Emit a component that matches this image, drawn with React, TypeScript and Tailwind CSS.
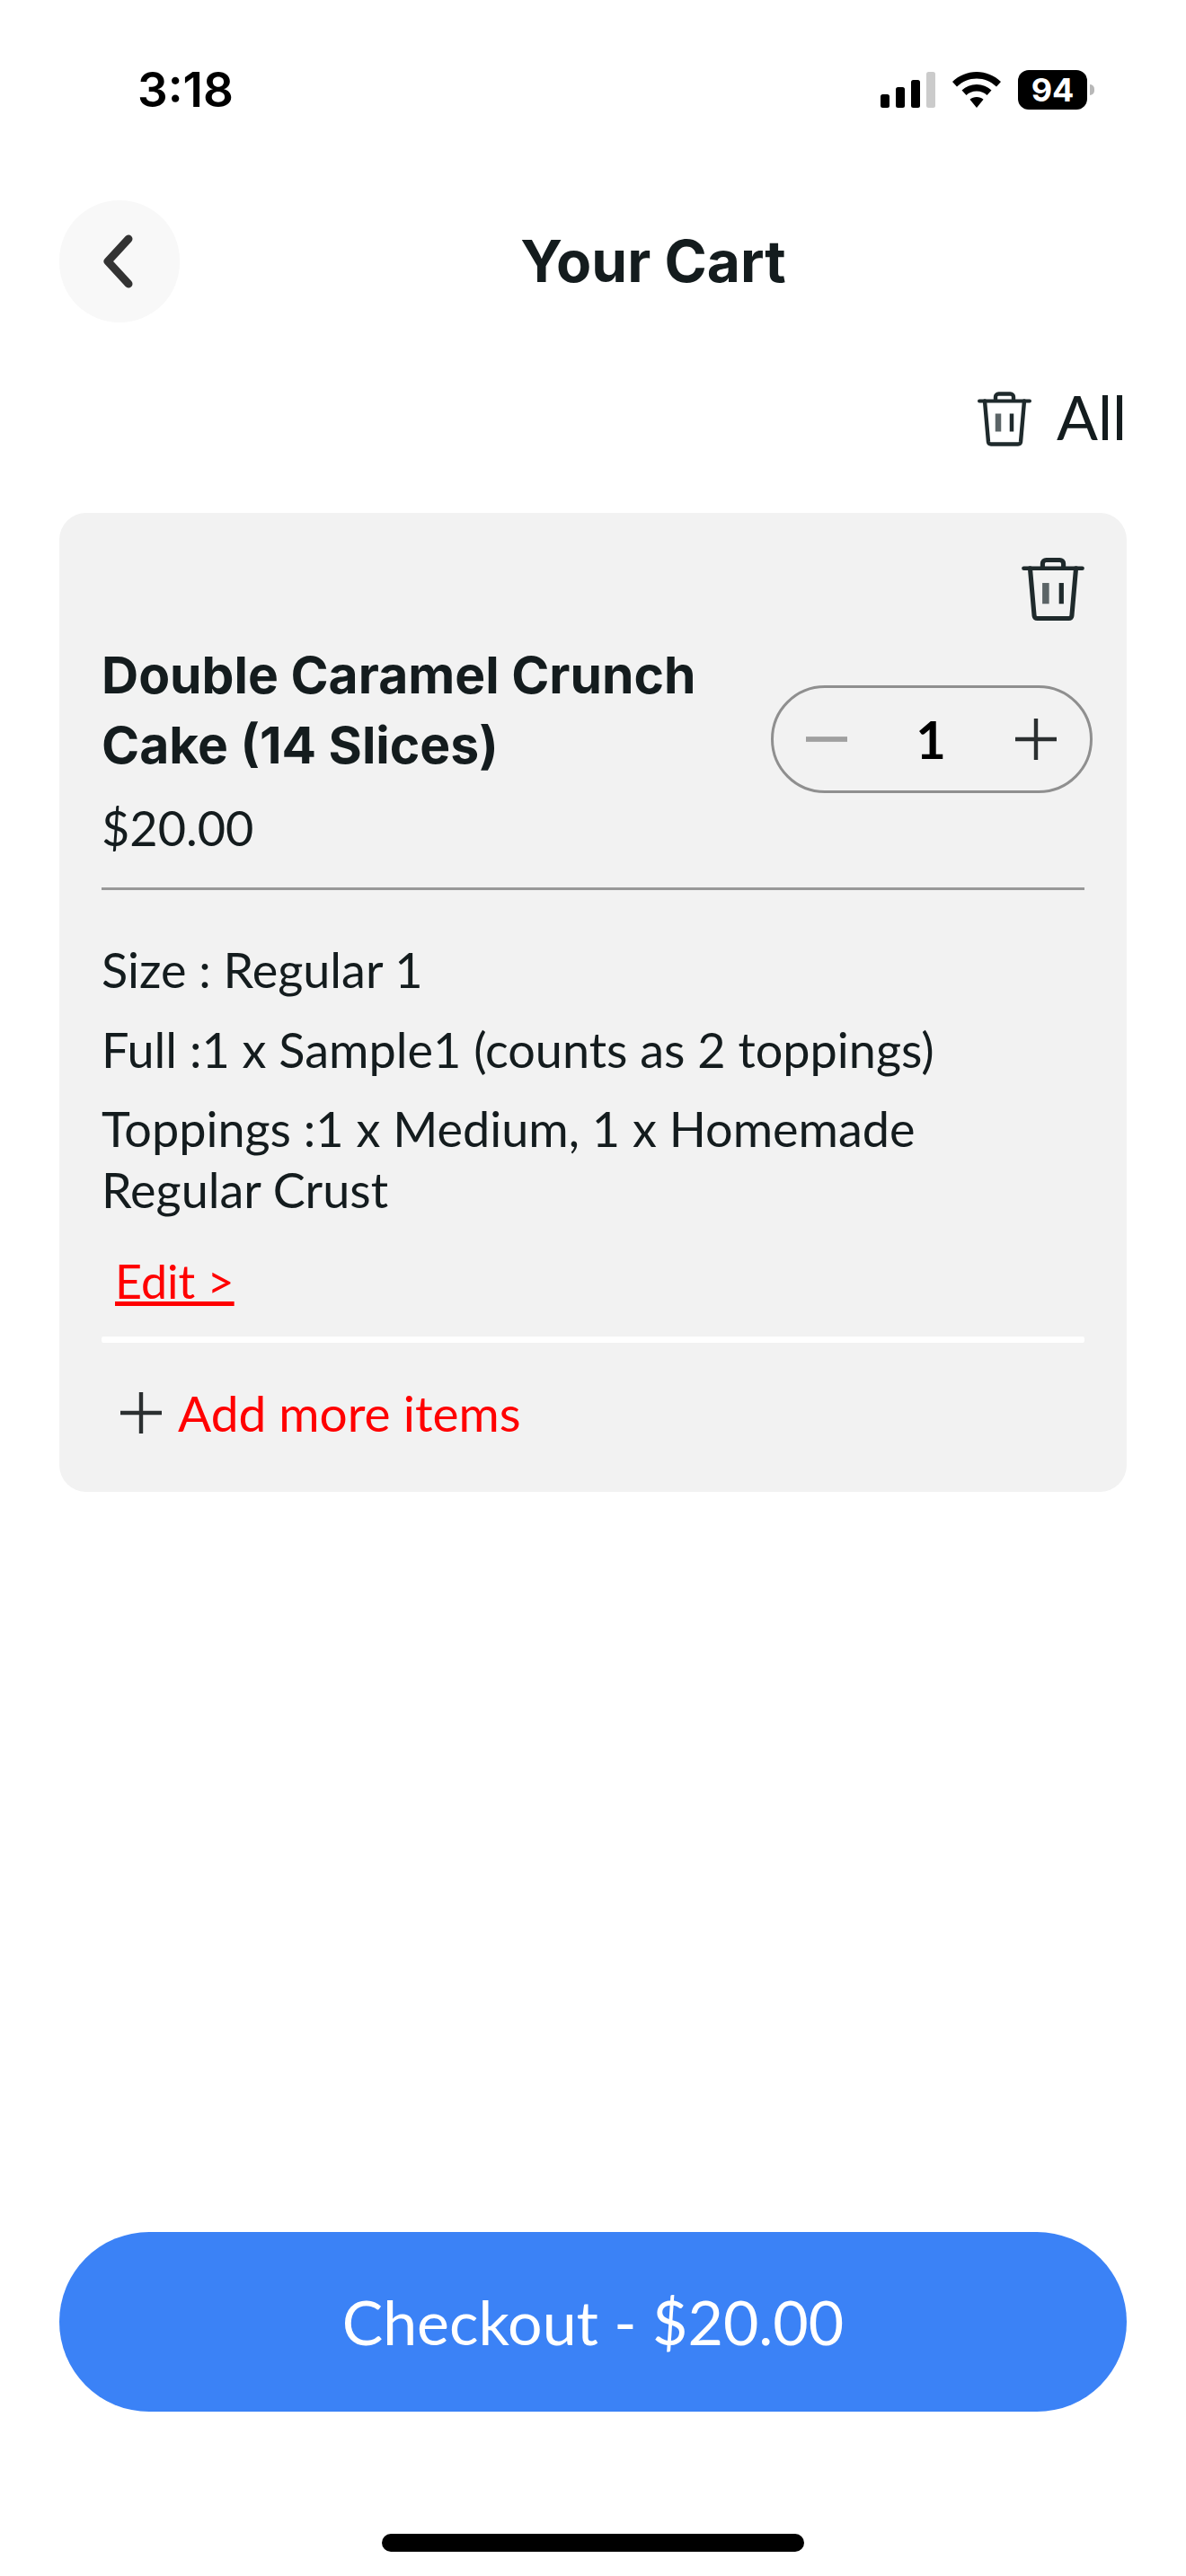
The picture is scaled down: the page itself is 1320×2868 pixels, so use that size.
import React from 'react';

const TrashIcon: React.FC<{ className: string }> = ({ className }) => (
  <svg viewBox="0 0 60 62" fill="none" stroke="#1f2a2c" strokeWidth="4.400" strokeLinecap="round" strokeLinejoin="round" className={className}>
    <path d="M20 10V6.500A3.500 3.500 0 0 1 23.500 3h13A3.500 3.500 0 0 1 40 6.500V10" />
    <path d="M2 11h56" strokeWidth="4" />
    <path d="M8 11l4 45.500a3 3 0 0 0 3 2.500h30a3 3 0 0 0 3-2.500L52 11" />
    <path d="M23 25v20" strokeWidth="6.500" strokeLinecap="butt" stroke="#5b6466" />
    <path d="M38 25v20" strokeWidth="4.500" strokeLinecap="butt" />
  </svg>
);

const PlusIcon: React.FC<{ className: string }> = ({ className }) => (
  <svg viewBox="0 0 48 48" fill="none" stroke="#2b2f30" strokeWidth="4.400" className={className}>
    <path d="M24 1v46M1 24h46" />
  </svg>
);

const StatusBar: React.FC = () => (
  <div className="flex h-[223px] justify-between pl-[153px] pr-[102px] pt-[70px]">
    <span className="font-['Inter'] text-[53px] font-semibold leading-[60px] text-black">3:18</span>
    <div className="flex h-[60px] items-center gap-[19px]">
      <svg viewBox="0 0 61 40" className="h-[40px] w-[61px]">
        <rect x="0" y="25" width="10" height="15" rx="2.500" fill="#000" />
        <rect x="17" y="17" width="10" height="23" rx="2.500" fill="#000" />
        <rect x="34" y="9" width="10" height="31" rx="2.500" fill="#000" />
        <rect x="51" y="0" width="10" height="40" rx="2.500" fill="#cbcbcb" />
      </svg>
      <svg viewBox="0 0 54 40" className="h-[40px] w-[54px]">
        <path d="M27 0C16.500 0 7.500 4 0 11l5 5.500C11.500 10.500 18.500 7.500 27 7.500S42.500 10.500 49 16.500L54 11C46.500 4 37.500 0 27 0z" fill="#000" />
        <path d="M27 14c-6.500 0-12 2.300-16.500 6.500l5 5.500c3-2.800 6.800-4.500 11.500-4.500S35.500 23.200 38.500 26l5-5.500C39 16.300 33.500 14 27 14z" fill="#000" />
        <path d="M27 28c-3 0-5.500 1-7.500 2.800L27 40l7.500-9.200C32.500 29 30 28 27 28z" fill="#000" />
      </svg>
      <div className="flex items-center">
        <div className="flex h-[44px] w-[77px] items-center justify-center rounded-[12px] bg-black font-['Inter'] text-[36px] font-bold leading-none text-white">
          94
        </div>
        <div className="ml-[3px] h-[12px] w-[5px] rounded-r-full bg-[#b8b8b8]" />
      </div>
    </div>
  </div>
);

const App: React.FC = () => {
  return (
    <div className="flex h-[2868px] w-[1320px] flex-col bg-white font-['Lato','Liberation_Sans',sans-serif] text-[#141c1e]">
      <StatusBar />

      <div className="flex h-[136px] items-center pl-[66px] pr-[66px]">
        <button className="flex h-[136px] w-[134px] items-center justify-center rounded-full bg-[#f8f8f8]">
          <svg viewBox="0 0 36 60" fill="none" stroke="#333333" strokeWidth="9" strokeLinecap="round" strokeLinejoin="round" className="mr-[4px] h-[60px] w-[36px]">
            <path d="M30 5L7 30l23 25" />
          </svg>
        </button>
        <h1 className="flex-1 text-center font-['Inter'] text-[64px] font-bold leading-[76px]">Your Cart</h1>
      </div>

      <div className="mt-[76px] flex h-[63px] items-center justify-end gap-[28px] pr-[66px]">
        <TrashIcon className="h-[63px] w-[60px]" />
        <span className="-mt-[6px] text-[68px] leading-[63px]">All</span>
      </div>

      <div className="mx-[66px] mt-[73px] rounded-[30px] bg-[#f2f2f2] px-[47px] pb-[58px] pt-[49px]">
        <div className="flex justify-end">
          <TrashIcon className="h-[72px] w-[70px]" />
        </div>

        <div className="mt-[21px] flex items-start justify-between">
          <div>
            <h2 className="w-[720px] font-['Inter'] text-[57px] font-bold leading-[78px]">Double Caramel Crunch Cake (14 Slices)</h2>
            <p className="mt-[23px] text-[54px] leading-[60px]">$20.00</p>
          </div>
          <div className="-mr-[9px] mt-[50px] flex h-[120px] w-[358px] items-center justify-between rounded-full border-[3px] border-[#8f8f8f] px-[36px]">
            <svg viewBox="0 0 48 6" className="h-[6px] w-[46px]">
              <rect width="48" height="6" fill="#a0a0a0" />
            </svg>
            <span className="text-[58px] font-bold leading-none text-black">1</span>
            <PlusIcon className="h-[48px] w-[48px]" />
          </div>
        </div>

        <div className="mt-[36px] h-[3px] bg-[#999999]" />

        <div className="mt-[59px] text-[54px] leading-[68px]">
          <p className="leading-[60px]">Size : Regular 1</p>
          <p className="mt-[29px] leading-[60px]">Full :1 x Sample1 (counts as 2 toppings)</p>
          <p className="mt-[24px] w-[1000px]">Toppings :1 x Medium, 1 x Homemade Regular Crust</p>
        </div>

        <a className="ml-[15px] mt-[37px] block w-fit text-[52px] leading-[60px] text-[#ff0000] underline">Edit &gt;</a>

        <div className="mt-[32px] h-[7px] rounded-[2px] bg-white" />

        <div className="ml-[20px] mt-[48px] flex items-center gap-[17px]">
          <PlusIcon className="h-[48px] w-[48px]" />
          <span className="text-[55px] leading-[60px] text-[#ff0000]">Add more items</span>
        </div>
      </div>

      <div className="flex-1" />

      <button className="mx-[66px] h-[200px] rounded-full bg-[#3b82f6] text-[68px] text-white">Checkout - $20.00</button>

      <div className="mx-auto mb-[27px] mt-[136px] h-[20px] w-[470px] rounded-full bg-black" />
    </div>
  );
};

export default App;
